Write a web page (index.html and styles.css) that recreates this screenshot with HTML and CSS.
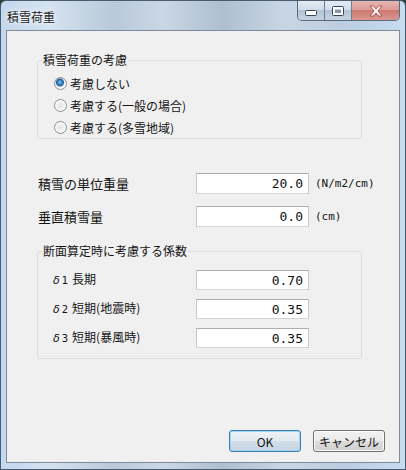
FILE: index.html
```html
<!DOCTYPE html>
<html lang="ja">

<head>
  <meta charset="UTF-8">
  <title>積雪荷重</title>
  <link rel="stylesheet" href="styles.css">
</head>

<body>
  <div class="window">
    <div class="titlebar">
      <span class="title">積雪荷重</span>
      <div class="caption">
        <span class="cap cap-min">
          <svg width="12" height="6" viewBox="0 0 12 6"><rect x="0.5" y="0.5" width="11" height="5" rx="1" fill="#fff" stroke="#34465a"/></svg>
        </span>
        <span class="cap cap-max">
          <svg width="12" height="10" viewBox="0 0 12 10"><rect x="0.5" y="0.5" width="11" height="9" rx="1" fill="#fff" stroke="#34465a"/><rect x="3" y="3.5" width="6" height="3.5" fill="#8496aa"/></svg>
        </span>
        <span class="cap cap-close">
          <svg width="14" height="12" viewBox="0 0 14 12"><path d="M1 1h3.5l2.5 3 2.5-3H13l-4 5 4 5H9.5L7 8l-2.5 3H1l4-5z" fill="#fbeaea" stroke="#9c4a48" stroke-width="0.8" stroke-linejoin="round"/></svg>
        </span>
      </div>
    </div>

    <div class="client">
      <fieldset class="group group-snow">
        <legend>積雪荷重の考慮</legend>
        <label class="radio-row first"><input type="radio" name="snow" checked><span>考慮しない</span></label>
        <label class="radio-row"><input type="radio" name="snow"><span>考慮する(一般の場合)</span></label>
        <label class="radio-row"><input type="radio" name="snow"><span>考慮する(多雪地域)</span></label>
      </fieldset>

      <div class="fields">
        <div class="field-row">
          <span class="field-label">積雪の単位重量</span>
          <input class="num" type="text" value="20.0" readonly>
          <span class="unit">(N/m2/cm)</span>
        </div>
        <div class="field-row">
          <span class="field-label">垂直積雪量</span>
          <input class="num" type="text" value="0.0" readonly>
          <span class="unit">(cm)</span>
        </div>
      </div>

      <fieldset class="group group-coef">
        <legend>断面算定時に考慮する係数</legend>
        <div class="coef-row first">
          <span class="coef-label"><i>δ</i><b>1</b>長期</span>
          <input class="num" type="text" value="0.70" readonly>
        </div>
        <div class="coef-row">
          <span class="coef-label"><i>δ</i><b>2</b>短期(地震時)</span>
          <input class="num" type="text" value="0.35" readonly>
        </div>
        <div class="coef-row">
          <span class="coef-label"><i>δ</i><b>3</b>短期(暴風時)</span>
          <input class="num" type="text" value="0.35" readonly>
        </div>
      </fieldset>

      <div class="actions">
        <button class="btn btn-default">OK</button>
        <button class="btn">キャンセル</button>
      </div>
    </div>
  </div>
</body>

</html>
```

FILE: styles.css
```css
body {
  margin: 0;
  background-color: #2f3b33;
  font-family: "Noto Sans CJK JP", "Noto Sans", sans-serif;
  font-size: 12px;
  color: #141414;
}
.window {
  box-sizing: border-box;
  width: 406px;
  height: 470px;
  border: 1px solid #4a5c70;
  border-radius: 6px 6px 0 0;
  background: linear-gradient(90deg, #c3d8ee 0%, #d4e2ef 12%, #b9c9da 28%, #cad7e5 40%, #aebfd1 55%, #c8d6e4 70%, #bccde0 85%, #c6dcf1 100%);
  display: flex;
  flex-direction: column;
}
.titlebar {
  height: 29px;
  display: flex;
  justify-content: space-between;
  align-items: flex-start;
}
.title {
  padding: 9px 0 0 6px;
  line-height: 14px;
  color: #1a1a1a;
  text-shadow: 0 0 6px #ffffff, 0 0 3px #ffffff;
}
.caption {
  display: flex;
  margin-right: 5px;
  border: 1px solid #5a6a7e;
  border-top: none;
  border-radius: 0 0 5px 5px;
  overflow: hidden;
}
.cap {
  height: 19px;
  display: flex;
  align-items: center;
  justify-content: center;
  background: linear-gradient(#e4ebf3 0%, #d2dde9 45%, #b4c3d4 50%, #c4d2e0 100%);
  border-right: 1px solid #6f7f92;
}
.cap-min {
  width: 27px;
  align-items: flex-end;
  padding-bottom: 4px;
  box-sizing: border-box;
}
.cap-max {
  width: 26px;
}
.cap-close {
  width: 47px;
  border-right: none;
  background: linear-gradient(#e7b5b1 0%, #dc9c97 45%, #cd7a72 50%, #d89690 100%);
}
.client {
  box-sizing: border-box;
  height: 433px;
  margin: 0 5px;
  border: 1px solid #7f8b98;
  background-color: #f0f0f0;
  padding-top: 22px;
  display: flex;
  flex-direction: column;
  align-items: flex-start;
}
.group {
  box-sizing: border-box;
  width: 325px;
  margin: 0 0 0 30px;
  padding: 0;
  border: 1px solid #d5dfe5;
  border-radius: 3px;
}
.group legend {
  margin-left: 4px;
  padding: 0 1px;
  line-height: 14px;
}
.radio-row {
  display: flex;
  align-items: center;
  height: 22px;
  padding-left: 16px;
}
.radio-row.first {
  margin-top: 5px;
}
.radio-row input {
  appearance: none;
  width: 13px;
  height: 13px;
  margin: 0 3px 0 0;
  border: 1px solid #8e8f8f;
  border-radius: 50%;
  background: radial-gradient(circle at 50% 50%, #e2e2e2 0, #f4f4f4 4px, #ffffff 6px);
}
.radio-row input:checked {
  background: radial-gradient(circle at 45% 40%, #8cc6f0 0, #3c86c8 2px, #1f5f9c 3.5px, #dfe6ec 4.5px, #f4f4f4 5px, #ffffff 6px);
}
.fields {
  margin-top: 34px;
  display: flex;
  flex-direction: column;
  gap: 12px;
}
.field-row {
  display: flex;
  align-items: center;
  height: 21px;
  padding-left: 31px;
}
.field-label {
  width: 158px;
  font-size: 13px;
  line-height: 16px;
}
.num {
  box-sizing: border-box;
  width: 113px;
  height: 21px;
  margin: 0;
  padding: 0 5px 0 0;
  border: 1px solid #abadb3;
  border-color: #abadb3 #c6c8cc #d2d4d8 #c6c8cc;
  background-color: #fff;
  font-family: "DejaVu Sans Mono", monospace;
  font-size: 13px;
  color: #111;
  text-align: right;
  outline: none;
}
.unit {
  margin-left: 6px;
  font-family: "DejaVu Sans Mono", monospace;
  font-size: 11px;
}
.group-coef {
  margin-top: 17px;
  padding-bottom: 10px;
  display: flex;
  flex-direction: column;
  gap: 9px;
}
.coef-row {
  display: flex;
  align-items: center;
  height: 20px;
  padding-left: 15px;
}
.coef-row.first {
  margin-top: 12px;
}
.coef-row .num {
  height: 20px;
}
.coef-label {
  width: 143px;
  line-height: 14px;
}
.coef-label i {
  font-family: "DejaVu Sans", sans-serif;
  font-size: 11px;
}
.coef-label b {
  font-weight: normal;
  font-family: "DejaVu Sans", sans-serif;
  font-size: 10px;
  margin: 0 4px 0 2px;
}
.actions {
  align-self: stretch;
  margin-top: auto;
  padding: 0 14px 10px 0;
  display: flex;
  justify-content: flex-end;
  gap: 12px;
}
.btn {
  box-sizing: border-box;
  width: 72px;
  height: 22px;
  padding: 0;
  border: 1px solid #707070;
  border-radius: 3px;
  background: linear-gradient(#f2f2f2 0%, #ebebeb 50%, #dddddd 50%, #cfcfcf 100%);
  box-shadow: inset 0 0 0 1px #fbfbfb;
  font-family: "Noto Sans CJK JP", "Noto Sans", sans-serif;
  font-size: 12px;
  color: #141414;
}
.btn-default {
  border-color: #3c7fb1;
  background: linear-gradient(#edf2f6 0%, #e2eaf0 50%, #d2dee8 50%, #c6d5e2 100%);
  box-shadow: inset 0 0 0 1px #9fd3ee;
}
```
